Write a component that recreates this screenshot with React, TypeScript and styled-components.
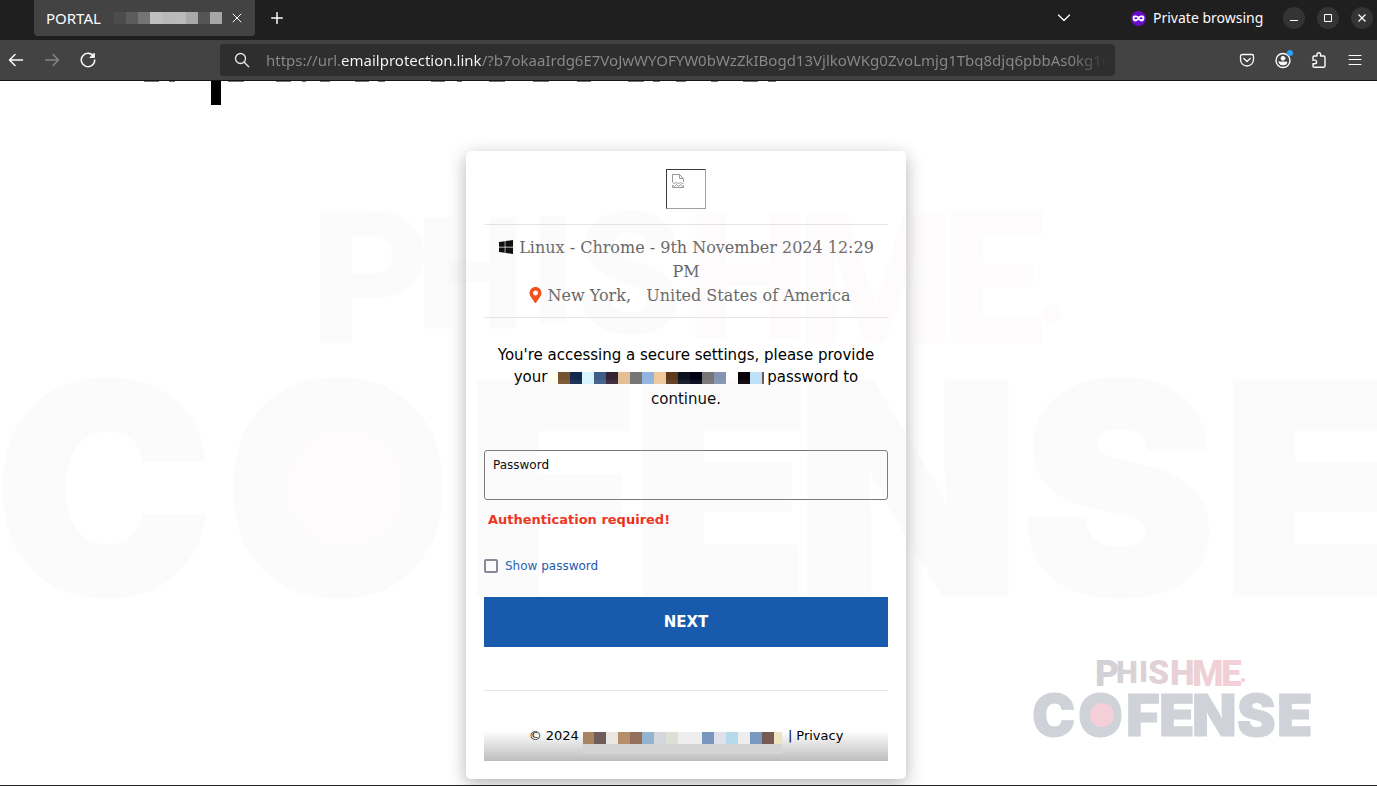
import React from 'react';
import styled, { createGlobalStyle } from 'styled-components';
import { FaWindows, FaMapMarkerAlt } from 'react-icons/fa';

const GlobalStyle = createGlobalStyle`
  *, *::before, *::after { box-sizing: border-box; }
  body { margin: 0; background: #fff; font-family: "DejaVu Sans", sans-serif; }
`;

const uiFont = '"Noto Sans", "Open Sans", sans-serif';

const Window = styled.div`
  position: relative;
  display: flex;
  flex-direction: column;
  min-height: 100vh;
  overflow: hidden;
  border-bottom: 1px solid #222;
`;

const TabBar = styled.header`
  display: flex;
  align-items: center;
  height: 40px;
  padding: 0 0 0 34px;
  background: #1f1f1f;
  color: #fbfbfe;
  font: 14px/20px ${uiFont};
`;

const Tab = styled.div`
  display: flex;
  align-items: center;
  align-self: flex-start;
  width: 221px;
  height: 36px;
  padding: 0 8px 0 12px;
  background: #434343;
  border-radius: 0 0 4px 4px;
`;

const TabTitle = styled.span`
  width: 56px;
  font-size: 15px;
  white-space: nowrap;
`;

const IconButton = styled.button<{ $size?: number; $round?: boolean }>`
  display: flex;
  flex: none;
  align-items: center;
  justify-content: center;
  width: ${p => p.$size ?? 20}px;
  height: ${p => p.$size ?? 20}px;
  padding: 0;
  border: 0;
  border-radius: ${p => (p.$round ? '50%' : '4px')};
  background: ${p => (p.$round ? '#343434' : 'transparent')};
  color: #fbfbfe;
  &:disabled { color: #858585; }
`;

const TabClose = styled(IconButton)`
  margin-left: 5px;
`;

const NewTab = styled(IconButton)`
  margin: 0 auto 4px 12px;
`;

const TabList = styled(IconButton)`
  margin: 0 57px 4px 0;
`;

const PrivateBadge = styled.div`
  display: flex;
  align-items: center;
  gap: 7px;
  width: 134px;
  margin: 0 18px 4px 0;
  white-space: nowrap;
`;

const WindowControls = styled.div`
  display: flex;
  gap: 12px;
  margin: 0 4px 4px 0;
`;

const NavBar = styled.nav`
  display: flex;
  align-items: center;
  height: 41px;
  padding: 0 12px 0 6px;
  background: #434343;
  border-bottom: 1px solid #151515;
`;

const NavButtons = styled.div`
  display: flex;
  gap: 16px;
  flex: none;
  width: 214px;
`;

const AddressBar = styled.label`
  display: flex;
  flex: 1;
  align-items: center;
  gap: 16px;
  height: 32px;
  padding: 0 8px 0 14px;
  background: #2e2e2e;
  border-radius: 4px;
  color: #e8e8e8;
`;

const AddressInput = styled.input`
  flex: 1;
  min-width: 0;
  height: 28px;
  padding: 0;
  border: 0;
  outline: 0;
  color: transparent;
  font: 15px/28px ${uiFont};
  background: linear-gradient(90deg, #8a8a8a 75px, #fbfbfe 75px, #fbfbfe 216px, #8a8a8a 216px, #8a8a8a calc(100% - 36px), #2e2e2e);
  background-clip: text;
  -webkit-background-clip: text;
`;

const Tools = styled.div`
  display: flex;
  justify-content: space-between;
  flex: none;
  width: 128px;
  margin-left: 122px;
`;

const Page = styled.main`
  position: relative;
  display: flex;
  flex: 1;
  flex-direction: column;
  align-items: center;
  padding: 0 5px 6px 0;
`;

const Headline = styled.svg`
  align-self: flex-start;
  width: 780px;
  height: 24px;
  margin-bottom: 46px;
`;

const Card = styled.form`
  width: 440px;
  max-width: 100%;
  padding: 18px;
  background: #fff;
  border-radius: 5px;
  box-shadow: 0 5px 18px rgba(0, 0, 0, 0.3);
`;

const BrokenImage = styled.div`
  width: 40px;
  height: 40px;
  margin: 0 auto 15px;
  padding: 4px 5px;
  border: 1px solid;
  border-color: #3c3c3c #a0a0a0 #a0a0a0 #3c3c3c;
  svg { display: block; }
`;

const Visit = styled.section`
  padding: 11px 8px 9px;
  border: solid #e6e6e6;
  border-width: 1px 0;
  color: #666;
  font: 16px/24px "DejaVu Serif", serif;
  text-align: center;
  svg { vertical-align: -2px; }
`;

const VisitLine = styled.p`
  margin: 0;
`;

const PlaceLine = styled(VisitLine)`
  padding-left: 8px;
  svg { width: 13px; }
`;

const Prompt = styled.p`
  margin: 26px 0 40px;
  color: #000;
  font-size: 15px;
  line-height: 22px;
  text-align: center;
`;

const Mosaic = styled.span<{ $colors: string[]; $first?: number; $width: number }>`
  display: inline-block;
  flex: none;
  width: ${p => p.$width}px;
  height: 12px;
  background: linear-gradient(90deg, ${p => p.$colors.map((c, i) => {
    const end = (p.$first ?? 12) + i * 12;
    return `${c} ${i === 0 ? 0 : end - 12}px ${end}px`;
  }).join(', ')});
`;

const PromptMosaic = styled(Mosaic)`
  margin: 0 3px 0 -2px;
  vertical-align: -2px;
`;

const Field = styled.div`
  display: flex;
  flex-direction: column;
  height: 50px;
  padding: 6px 8px;
  border: 1px solid #777;
  border-radius: 3px;
`;

const FieldLabel = styled.label`
  color: #000;
  font-size: 12px;
  line-height: 16px;
`;

const FieldInput = styled.input`
  width: 100%;
  height: 20px;
  padding: 0;
  border: 0;
  outline: 0;
  background: transparent;
`;

const ErrorText = styled.p`
  margin: 10px 4px 28px;
  color: #ee2c15;
  font-size: 13px;
  font-weight: bold;
  line-height: 20px;
`;

const CheckRow = styled.label`
  display: flex;
  align-items: center;
  gap: 7px;
  height: 16px;
  margin-bottom: 23px;
  color: #1a5bb0;
  font-size: 12px;
  line-height: 16px;
`;

const Checkbox = styled.input`
  appearance: none;
  width: 14px;
  height: 14px;
  margin: 0;
  border: 2px solid #858494;
  border-radius: 2px;
  background: #fff;
  &:checked { background: #1a5bb0; }
`;

const SubmitButton = styled.button`
  display: block;
  width: 100%;
  height: 50px;
  margin-bottom: 43px;
  border: 0;
  background: #185aac;
  color: #fff;
  font: bold 15px/20px "DejaVu Sans", sans-serif;
`;

const Footer = styled.footer`
  padding-top: 40px;
  border-top: 1px solid #e6e6e6;
`;

const FooterLine = styled.div`
  display: flex;
  justify-content: center;
  height: 30px;
  background: linear-gradient(#fff, #bdbdbd);
  color: #000;
  font-size: 13px;
  line-height: 10px;
`;

const FooterRedaction = styled.span`
  height: 22px;
  margin: 1px 6px 0 4px;
  background: #d4d4d4;
  ${Mosaic} { display: block; }
`;

const PrivacyLink = styled.a`
  margin-left: 4px;
  color: #000;
  text-decoration: none;
`;

const Backdrop = styled.div`
  position: absolute;
  top: 183px;
  left: 0;
  right: 0;
  opacity: 0.07;
  pointer-events: none;
`;

const CornerMark = styled.div`
  position: absolute;
  right: 69px;
  bottom: 48px;
  width: 275px;
  pointer-events: none;
`;

const BrandSvg = styled.svg`
  display: block;
  width: 100%;
  overflow: visible;
`;

const tabColors = ['#444', '#4c4c4c', '#5c5c5c', '#747474', '#bfbfbf', '#b9b9b9', '#bababa', '#a9a9a9', '#555', '#a6a6a6'];
const promptColors = ['#fffff0', '#76532e', '#12284e', '#d8f6ff', '#3e5c88', '#352233', '#e5be93', '#757575', '#90b4df', '#efc99b', '#5c391a', '#0b111e', '#020014', '#757575', '#8495af', '#fff', '#070006', '#bce2fa', '#76534e'];
const footerColors = ['#a98463', '#6f5d5c', '#ebe6e0', '#b68e69', '#93705b', '#93b4d0', '#d4d7db', '#dee0d5', '#eee', '#eee', '#7896be', '#dfe2ea', '#b7daea', '#eee', '#7899c1', '#775a54', '#ece5bf'];

const dashes = [[144, 15], [169, 6], [228, 16], [276, 15], [302, 4], [320, 10], [355, 14], [378, 7], [431, 14], [457, 5], [489, 16], [533, 16], [577, 14], [628, 16], [653, 7], [676, 10], [711, 7], [743, 15], [768, 8]];

/* letter, x, baseline, font size: the word swells towards both ends */
const phishLetters = [
  ['P', 62, 32, 37], ['H', 83, 29, 31], ['I', 106, 28, 30], ['S', 115, 30, 34],
  ['H', 137, 31, 35], ['M', 159, 32, 36], ['E', 188, 32, 37],
] as const;

function Brand({ id }: { id: string }) {
  return (
    <BrandSvg viewBox="0 0 275 83" role="img" aria-label="PhishMe Cofense">
      <defs>
        <linearGradient id={id} gradientUnits="userSpaceOnUse" x1="63" y1="0" x2="205" y2="0">
          <stop offset="0" stopColor="#cfd1d7" />
          <stop offset="0.6" stopColor="#e8d1d5" />
          <stop offset="1" stopColor="#f5cfd8" />
        </linearGradient>
      </defs>
      <g fill={`url(#${id})`} fontFamily="Roboto, sans-serif" fontWeight="900">
        {phishLetters.map(([letter, x, y, size], i) => (
          <text key={i} x={x} y={y} fontSize={size}>{letter}</text>
        ))}
      </g>
      <text
        x="-1 45 93 126 159 204 244"
        y="82"
        fill="#cfd2d8"
        stroke="#cfd2d8"
        fontFamily="Inter, sans-serif"
        fontWeight="900"
        fontSize="58"
      >
        COFENSE
      </text>
      <circle cx="69" cy="61" r="12" fill="#f5cfd8" />
      <circle cx="210" cy="26" r="2" fill="#f5cfd8" />
    </BrandSvg>
  );
}

const line = { fill: 'none', stroke: 'currentColor', strokeLinecap: 'round' as const, strokeLinejoin: 'round' as const };

export default function App() {
  return (
    <>
      <GlobalStyle />
      <Window>
        <TabBar>
          <Tab>
            <TabTitle>PORTAL</TabTitle>
            <Mosaic $colors={tabColors} $width={120} />
            <TabClose aria-label="Close tab">
              <svg width="10" height="10" {...line}><path d="M1 1l8 8M9 1l-8 8" /></svg>
            </TabClose>
          </Tab>
          <NewTab aria-label="New tab">
            <svg width="12" height="12" {...line} strokeWidth="1.5"><path d="M6 .7v10.6M.7 6h10.6" /></svg>
          </NewTab>
          <TabList aria-label="List all tabs">
            <svg width="14" height="8" {...line} strokeWidth="1.3"><path d="M1.5 1L7 6.5 12.500 1" /></svg>
          </TabList>
          <PrivateBadge>
            <svg width="15" height="15" viewBox="0 0 15 15">
              <circle cx="7.500" cy="7.500" r="7.500" fill="#6a0bcc" />
              <path d="M1.600 6.500c0-2.500 3.600-2.600 5.900-.9 2.300-1.700 5.900-1.600 5.900.9 0 2.600-1 4-2.700 4-1.500 0-2.200-1.500-3.200-1.500s-1.700 1.500-3.200 1.500c-1.700 0-2.700-1.400-2.700-4z" fill="#fff" />
              <ellipse cx="4.900" cy="7.300" rx="1.500" ry="1" fill="#6a0bcc" />
              <ellipse cx="10.100" cy="7.300" rx="1.500" ry="1" fill="#6a0bcc" />
            </svg>
            Private browsing
          </PrivateBadge>
          <WindowControls>
            <IconButton $round $size={22} aria-label="Minimize">
              <svg width="8" height="8"><path d="M0 6.500h8" stroke="#fff" /></svg>
            </IconButton>
            <IconButton $round $size={22} aria-label="Maximize">
              <svg width="8" height="8"><path d="M.5.5h7v7h-7z" fill="none" stroke="#fff" /></svg>
            </IconButton>
            <IconButton $round $size={22} aria-label="Close window">
              <svg width="8" height="8"><path d="M.5.5l7 7M7.500.5l-7 7" stroke="#fff" strokeWidth="1.200" /></svg>
            </IconButton>
          </WindowControls>
        </TabBar>

        <NavBar>
          <NavButtons>
            <IconButton aria-label="Back">
              <svg width="16" height="16" {...line} strokeWidth="1.5"><path d="M14.500 8h-13M7 2.500L1.500 8 7 13.500" /></svg>
            </IconButton>
            <IconButton aria-label="Forward" disabled>
              <svg width="16" height="16" {...line} strokeWidth="1.5"><path d="M1.500 8h13M9 2.500L14.500 8 9 13.500" /></svg>
            </IconButton>
            <IconButton aria-label="Reload">
              <svg width="16" height="16" {...line} strokeWidth="1.5"><path d="M13.500 4.200A6.700 6.700 0 1 0 14.700 8" /><path d="M14.300 1.500v4h-4z" fill="currentColor" strokeWidth="1" /></svg>
            </IconButton>
          </NavButtons>
          <AddressBar>
            <svg width="16" height="16" {...line} strokeWidth="1.300"><circle cx="6.500" cy="6.500" r="5" /><path d="M10.200 10.200l4.500 4.500" /></svg>
            <AddressInput
              aria-label="Address"
              spellCheck={false}
              defaultValue="https://url.emailprotection.link/?b7okaaIrdg6E7VoJwWYOFYW0bWzZkIBogd13VjlkoWKg0ZvoLmjg1Tbq8djq6pbbAs0kg1r"
            />
          </AddressBar>
          <Tools>
            <IconButton aria-label="Save to Pocket">
              <svg width="16" height="16" {...line} strokeWidth="1.300"><path d="M3 2.500h10a1.500 1.500 0 0 1 1.500 1.500v3.500a6.500 6.500 0 0 1-13 0V4A1.500 1.500 0 0 1 3 2.500zM4.800 6.500L8 9.500l3.200-3" /></svg>
            </IconButton>
            <IconButton aria-label="Account">
              <svg width="20" height="20" {...line} strokeWidth="1.400">
                <circle cx="10" cy="10.500" r="7" />
                <circle cx="10" cy="8.300" r="2" fill="currentColor" strokeWidth="0.800" />
                <path d="M6 12h8a4 3 0 0 1-8 0z" fill="currentColor" strokeWidth="0.800" />
                <circle cx="17" cy="3" r="3" fill="#2aa1fb" stroke="none" />
              </svg>
            </IconButton>
            <IconButton aria-label="Extensions">
              <svg width="16" height="18" {...line} strokeWidth="1.400"><path d="M2 8V6q0-1 1-1h3V3.500a1.800 1.800 0 0 1 3.600 0V5h3q1.400 0 1.400 1.400V15q0 1.300-1.300 1.300H3.200Q2 16.300 2 15v-2.300h1.800a1.800 1.800 0 0 0 0-3.600H1.500" /></svg>
            </IconButton>
            <IconButton aria-label="Menu">
              <svg width="14" height="12" {...line}><path d="M1 1.500h12M1 5.500h12M1 10.500h12" /></svg>
            </IconButton>
          </Tools>
        </NavBar>

        <Page>
          <Headline aria-hidden="true">
            {dashes.map(([x, w]) => <rect key={x} x={x} y="0" width={w} height="1" fill="#757575" />)}
            <rect x="211" y="0" width="10" height="24" fill="#000" />
          </Headline>
          <Card onSubmit={e => e.preventDefault()}>
            <BrokenImage role="img" aria-label="Missing image">
              <svg width="14" height="15" fill="none" stroke="#999">
                <path d="M.5 8V.5h7l4 4V8M7.500.5v4h4M.5 8l2 2 2-2 2 2 2-2 2 2 1-1M.5 11.500v2h11v-2l-1 1-2-2-2 2-2-2-2 2z" />
              </svg>
            </BrokenImage>
            <Visit>
              <VisitLine><FaWindows color="#000" size={16} /> Linux - Chrome - 9th November 2024 12:29 PM</VisitLine>
              <PlaceLine><FaMapMarkerAlt color="#f4511e" size={16} /> New York, &nbsp; United States of America</PlaceLine>
            </Visit>
            <Prompt>
              You're accessing a secure settings, please provide your <PromptMosaic $colors={promptColors} $first={8} $width={214} />
              password to continue.
            </Prompt>
            <Field>
              <FieldLabel htmlFor="password">Password</FieldLabel>
              <FieldInput id="password" type="password" />
            </Field>
            <ErrorText>Authentication required!</ErrorText>
            <CheckRow>
              <Checkbox type="checkbox" />
              Show password
            </CheckRow>
            <SubmitButton type="submit">NEXT</SubmitButton>
            <Footer>
              <FooterLine>
                <span>© 2024</span>
                <FooterRedaction><Mosaic $colors={footerColors} $first={11} $width={199} /></FooterRedaction>
                <span>|</span>
                <PrivacyLink href="#privacy">Privacy</PrivacyLink>
              </FooterLine>
            </Footer>
          </Card>
        </Page>
        <Backdrop><Brand id="backdrop-fill" /></Backdrop>
        <CornerMark><Brand id="corner-fill" /></CornerMark>
      </Window>
    </>
  );
}
